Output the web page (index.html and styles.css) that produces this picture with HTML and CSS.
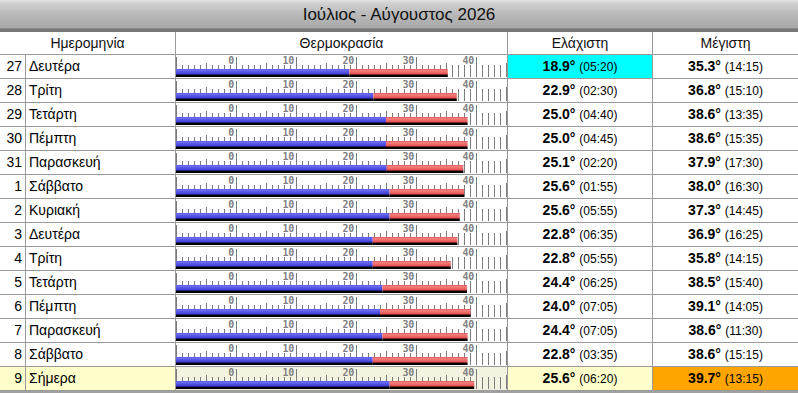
FILE: index.html
```html
<!DOCTYPE html>
<html lang="el">
<head>
<meta charset="utf-8">
<title>Ιούλιος - Αύγουστος 2026</title>
<link rel="stylesheet" href="styles.css">
</head>
<body>
<svg class="defs" aria-hidden="true">
  <defs>
    <pattern id="t1" width="6" height="12" patternUnits="userSpaceOnUse"><rect x="0" y="0" width="1" height="12" fill="#7c7c7c"/></pattern>
    <pattern id="t5" width="30" height="14" patternUnits="userSpaceOnUse"><rect x="0" y="0" width="1" height="14" fill="#7c7c7c"/></pattern>
    <pattern id="t10" width="60" height="20" patternUnits="userSpaceOnUse"><rect x="0" y="0" width="1" height="20" fill="#7c7c7c"/></pattern>
    <linearGradient id="gb" x1="0" y1="0" x2="0" y2="1">
      <stop offset="0" stop-color="#4646d8"/>
      <stop offset="0.14" stop-color="#7676f6"/>
      <stop offset="0.3" stop-color="#5a5aea"/>
      <stop offset="0.62" stop-color="#3e3ed2"/>
      <stop offset="0.7" stop-color="#1c1c70"/>
      <stop offset="0.76" stop-color="#000"/>
      <stop offset="1" stop-color="#000"/>
    </linearGradient>
    <linearGradient id="gr" x1="0" y1="0" x2="0" y2="1">
      <stop offset="0" stop-color="#d84848"/>
      <stop offset="0.14" stop-color="#f48080"/>
      <stop offset="0.36" stop-color="#f07070"/>
      <stop offset="0.62" stop-color="#e05252"/>
      <stop offset="0.7" stop-color="#7a1c1c"/>
      <stop offset="0.76" stop-color="#000"/>
      <stop offset="1" stop-color="#000"/>
    </linearGradient>
    <symbol id="scale" viewBox="0 0 331 23">
      <rect x="0" y="10" width="331" height="12" fill="url(#t1)"/>
      <rect x="0" y="8" width="331" height="14" fill="url(#t5)"/>
      <rect x="0" y="2" width="331" height="20" fill="url(#t10)"/>
      <g class="lbl">
        <text x="58" y="9">0</text>
        <text x="118" y="9">10</text>
        <text x="178" y="9">20</text>
        <text x="238" y="9">30</text>
        <text x="298" y="9">40</text>
      </g>
    </symbol>
  </defs>
</svg>

<div class="panel">
  <div class="title">Ιούλιος - Αύγουστος 2026</div>
  <div class="grid">
    <div class="row head">
      <div class="cell c12">Ημερομηνία</div>
      <div class="cell c3">Θερμοκρασία</div>
      <div class="cell c4">Ελάχιστη</div>
      <div class="cell c5">Μέγιστη</div>
    </div>

    <div class="row">
      <div class="cell num">27</div><div class="cell name">Δευτέρα</div>
      <div class="cell thermo"><svg width="331" height="23"><use href="#scale"/><rect x="0" y="14" width="173.4" height="8" fill="url(#gb)"/><rect x="173.4" y="14" width="98.4" height="8" fill="url(#gr)"/></svg></div>
      <div class="cell val cyan"><b>18.9°</b> <small>(05:20)</small></div>
      <div class="cell val last"><b>35.3°</b> <small>(14:15)</small></div>
    </div>
    <div class="row">
      <div class="cell num">28</div><div class="cell name">Τρίτη</div>
      <div class="cell thermo"><svg width="331" height="23"><use href="#scale"/><rect x="0" y="14" width="197.4" height="8" fill="url(#gb)"/><rect x="197.4" y="14" width="83.4" height="8" fill="url(#gr)"/></svg></div>
      <div class="cell val"><b>22.9°</b> <small>(02:30)</small></div>
      <div class="cell val last"><b>36.8°</b> <small>(15:10)</small></div>
    </div>
    <div class="row">
      <div class="cell num">29</div><div class="cell name">Τετάρτη</div>
      <div class="cell thermo"><svg width="331" height="23"><use href="#scale"/><rect x="0" y="14" width="210" height="8" fill="url(#gb)"/><rect x="210" y="14" width="81.6" height="8" fill="url(#gr)"/></svg></div>
      <div class="cell val"><b>25.0°</b> <small>(04:40)</small></div>
      <div class="cell val last"><b>38.6°</b> <small>(13:35)</small></div>
    </div>
    <div class="row">
      <div class="cell num">30</div><div class="cell name">Πέμπτη</div>
      <div class="cell thermo"><svg width="331" height="23"><use href="#scale"/><rect x="0" y="14" width="210" height="8" fill="url(#gb)"/><rect x="210" y="14" width="81.6" height="8" fill="url(#gr)"/></svg></div>
      <div class="cell val"><b>25.0°</b> <small>(04:45)</small></div>
      <div class="cell val last"><b>38.6°</b> <small>(15:35)</small></div>
    </div>
    <div class="row">
      <div class="cell num">31</div><div class="cell name">Παρασκευή</div>
      <div class="cell thermo"><svg width="331" height="23"><use href="#scale"/><rect x="0" y="14" width="210.6" height="8" fill="url(#gb)"/><rect x="210.6" y="14" width="76.8" height="8" fill="url(#gr)"/></svg></div>
      <div class="cell val"><b>25.1°</b> <small>(02:20)</small></div>
      <div class="cell val last"><b>37.9°</b> <small>(17:30)</small></div>
    </div>
    <div class="row">
      <div class="cell num">1</div><div class="cell name">Σάββατο</div>
      <div class="cell thermo"><svg width="331" height="23"><use href="#scale"/><rect x="0" y="14" width="213.6" height="8" fill="url(#gb)"/><rect x="213.6" y="14" width="74.4" height="8" fill="url(#gr)"/></svg></div>
      <div class="cell val"><b>25.6°</b> <small>(01:55)</small></div>
      <div class="cell val last"><b>38.0°</b> <small>(16:30)</small></div>
    </div>
    <div class="row">
      <div class="cell num">2</div><div class="cell name">Κυριακή</div>
      <div class="cell thermo"><svg width="331" height="23"><use href="#scale"/><rect x="0" y="14" width="213.6" height="8" fill="url(#gb)"/><rect x="213.6" y="14" width="70.2" height="8" fill="url(#gr)"/></svg></div>
      <div class="cell val"><b>25.6°</b> <small>(05:55)</small></div>
      <div class="cell val last"><b>37.3°</b> <small>(14:45)</small></div>
    </div>
    <div class="row">
      <div class="cell num">3</div><div class="cell name">Δευτέρα</div>
      <div class="cell thermo"><svg width="331" height="23"><use href="#scale"/><rect x="0" y="14" width="196.8" height="8" fill="url(#gb)"/><rect x="196.8" y="14" width="84.6" height="8" fill="url(#gr)"/></svg></div>
      <div class="cell val"><b>22.8°</b> <small>(06:35)</small></div>
      <div class="cell val last"><b>36.9°</b> <small>(16:25)</small></div>
    </div>
    <div class="row">
      <div class="cell num">4</div><div class="cell name">Τρίτη</div>
      <div class="cell thermo"><svg width="331" height="23"><use href="#scale"/><rect x="0" y="14" width="196.8" height="8" fill="url(#gb)"/><rect x="196.8" y="14" width="78" height="8" fill="url(#gr)"/></svg></div>
      <div class="cell val"><b>22.8°</b> <small>(05:55)</small></div>
      <div class="cell val last"><b>35.8°</b> <small>(14:15)</small></div>
    </div>
    <div class="row">
      <div class="cell num">5</div><div class="cell name">Τετάρτη</div>
      <div class="cell thermo"><svg width="331" height="23"><use href="#scale"/><rect x="0" y="14" width="206.4" height="8" fill="url(#gb)"/><rect x="206.4" y="14" width="84.6" height="8" fill="url(#gr)"/></svg></div>
      <div class="cell val"><b>24.4°</b> <small>(06:25)</small></div>
      <div class="cell val last"><b>38.5°</b> <small>(15:40)</small></div>
    </div>
    <div class="row">
      <div class="cell num">6</div><div class="cell name">Πέμπτη</div>
      <div class="cell thermo"><svg width="331" height="23"><use href="#scale"/><rect x="0" y="14" width="204" height="8" fill="url(#gb)"/><rect x="204" y="14" width="90.6" height="8" fill="url(#gr)"/></svg></div>
      <div class="cell val"><b>24.0°</b> <small>(07:05)</small></div>
      <div class="cell val last"><b>39.1°</b> <small>(14:05)</small></div>
    </div>
    <div class="row">
      <div class="cell num">7</div><div class="cell name">Παρασκευή</div>
      <div class="cell thermo"><svg width="331" height="23"><use href="#scale"/><rect x="0" y="14" width="206.4" height="8" fill="url(#gb)"/><rect x="206.4" y="14" width="85.2" height="8" fill="url(#gr)"/></svg></div>
      <div class="cell val"><b>24.4°</b> <small>(07:05)</small></div>
      <div class="cell val last"><b>38.6°</b> <small>(11:30)</small></div>
    </div>
    <div class="row">
      <div class="cell num">8</div><div class="cell name">Σάββατο</div>
      <div class="cell thermo"><svg width="331" height="23"><use href="#scale"/><rect x="0" y="14" width="196.8" height="8" fill="url(#gb)"/><rect x="196.8" y="14" width="94.8" height="8" fill="url(#gr)"/></svg></div>
      <div class="cell val"><b>22.8°</b> <small>(03:35)</small></div>
      <div class="cell val last"><b>38.6°</b> <small>(15:15)</small></div>
    </div>
    <div class="row today">
      <div class="cell num">9</div><div class="cell name">Σήμερα</div>
      <div class="cell thermo"><svg width="331" height="23"><use href="#scale"/><rect x="0" y="14" width="213.6" height="8" fill="url(#gb)"/><rect x="213.6" y="14" width="84.6" height="8" fill="url(#gr)"/></svg></div>
      <div class="cell val"><b>25.6°</b> <small>(06:20)</small></div>
      <div class="cell val last orange"><b>39.7°</b> <small>(13:15)</small></div>
    </div>
  </div>
  <div class="foot"></div>
</div>
</body>
</html>
```

FILE: styles.css
```css
* { box-sizing: border-box; }
html, body { margin: 0; padding: 0; background: #fff; }
body { font-family: "Liberation Sans", Arial, sans-serif; color: #000; }

.defs { display: block; width: 0; height: 0; overflow: hidden; }

.panel { width: 798px; }

.title {
  height: 32px;
  line-height: 29px;
  text-align: center;
  font-size: 17px;
  color: #111;
  background: linear-gradient(#e2e2e2 0, #d2d2d2 3px, #bdbdbd 12px, #a9a9a9 27px, #a0a0a0 29px);
  border-bottom: 3px solid #777;
  box-shadow: inset 0 -1px 0 #8a8a8a;
}

.row {
  display: grid;
  grid-template-columns: 26px 150px 332px 145px 145px;
  height: 24px;
}
.row.head { height: 23px; }

.cell {
  border-right: 1px solid #9a9a9a;
  border-bottom: 1px solid #9a9a9a;
  font-size: 14px;
  line-height: 23px;
  white-space: nowrap;
  overflow: hidden;
}
.head .cell { line-height: 22px; text-align: center; color: #111; }
.head .c12 { grid-column: 1 / 3; }
.cell.last, .head .c5 { border-right: none; }

.num { text-align: right; padding-right: 3px; }
.name { padding-left: 3px; }
.thermo svg { display: block; }
.lbl text {
  font-family: "DejaVu Sans Mono", monospace;
  font-size: 10px;
  font-weight: bold;
  fill: #808080;
  text-anchor: end;
  letter-spacing: -0.3px;
}

.val { text-align: center; }
.val b { font-weight: bold; font-size: 14px; }
.val small { font-size: 12px; }

.cyan { background: #00ffff; }
.today .cell { background: #ffffcc; }
.today .thermo { background: #f3f3e2; }
.today .orange { background: #ffa500; }

.foot { height: 4px; background: #a0a0a0; }
```
